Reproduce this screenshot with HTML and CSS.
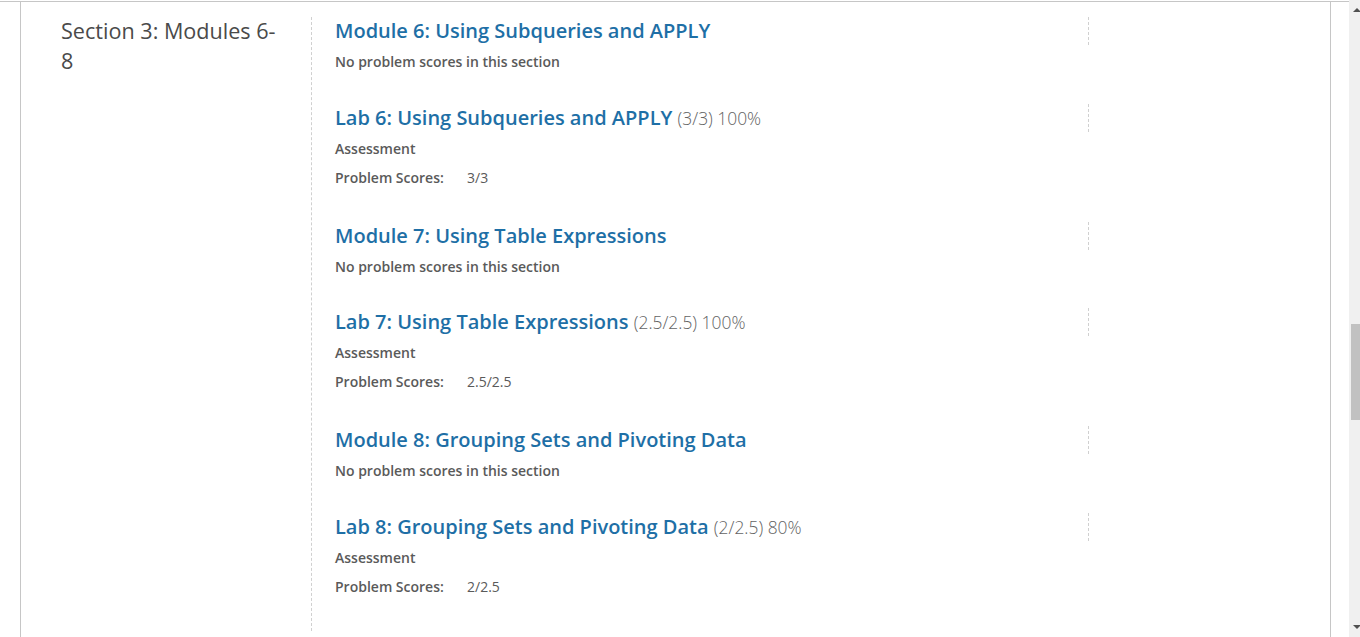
FILE: index.html
```html
<!DOCTYPE html>
<html lang="en">
<head>
<meta charset="utf-8">
<title>Progress</title>
<link rel="stylesheet" href="styles.css">
</head>
<body>
<div class="window">
  <main class="main">
    <div class="panel">
      <section class="chapter">
        <h2 class="chapter-title">Section 3: Modules 6-8</h2>
        <div class="sections">
          <div class="item">
            <h3 class="item-head"><a class="item-link" href="#">Module 6: Using Subqueries and APPLY</a></h3>
            <p class="meta">No problem scores in this section</p>
          </div>
          <div class="item lab">
            <h3 class="item-head"><a class="item-link" href="#">Lab 6: Using Subqueries and APPLY</a> <span class="score">(3/3) 100%</span></h3>
            <p class="meta">Assessment</p>
            <p class="meta scores"><span class="scores-label">Problem Scores:</span><span class="scores-val">3/3</span></p>
          </div>
          <div class="item">
            <h3 class="item-head"><a class="item-link" href="#">Module 7: Using Table Expressions</a></h3>
            <p class="meta">No problem scores in this section</p>
          </div>
          <div class="item lab">
            <h3 class="item-head"><a class="item-link" href="#">Lab 7: Using Table Expressions</a> <span class="score">(2.5/2.5) 100%</span></h3>
            <p class="meta">Assessment</p>
            <p class="meta scores"><span class="scores-label">Problem Scores:</span><span class="scores-val">2.5/2.5</span></p>
          </div>
          <div class="item">
            <h3 class="item-head"><a class="item-link" href="#">Module 8: Grouping Sets and Pivoting Data</a></h3>
            <p class="meta">No problem scores in this section</p>
          </div>
          <div class="item lab">
            <h3 class="item-head"><a class="item-link" href="#">Lab 8: Grouping Sets and Pivoting Data</a> <span class="score">(2/2.5) 80%</span></h3>
            <p class="meta">Assessment</p>
            <p class="meta scores"><span class="scores-label">Problem Scores:</span><span class="scores-val">2/2.5</span></p>
          </div>
        </div>
      </section>
    </div>
  </main>
  <div class="scrollbar">
    <span class="arrow up"></span>
    <div class="track"><div class="thumb"></div></div>
    <span class="arrow down"></span>
  </div>
</div>
</body>
</html>
```
FILE: styles.css
```css
html, body {
  margin: 0;
  padding: 0;
  background: #fff;
}
body {
  font-family: "Open Sans", "Liberation Sans", sans-serif;
  color: #4f4f4f;
}
.window {
  display: flex;
  height: 637px;
  overflow: hidden;
}
.main {
  flex: 1;
  margin-top: 1px;
  border-top: 1px solid #c6c6c6;
  padding-right: 18px;
}
.panel {
  margin-left: 20px;
  height: 100%;
  border-left: 1px solid #c6c6c6;
  border-right: 1px solid #c6c6c6;
  padding: 15px 0 0 40px;
  box-sizing: border-box;
}
.chapter {
  display: flex;
}
.chapter-title {
  width: 222px;
  margin: -1px 0 0;
  padding-right: 28px;
  font-size: 21.6px;
  font-weight: 400;
  line-height: 30px;
  color: #4a4a4a;
}
.sections {
  border-left: 1px dashed #d0d0d0;
  padding: 0 0 34px 23px;
}
.item {
  margin-bottom: 31.5px;
}
.item.lab {
  margin-bottom: 34px;
}
.item:last-child {
  margin-bottom: 0;
}
.item-head {
  width: 754px;
  box-sizing: border-box;
  margin: 0;
  height: 28px;
  line-height: 28px;
  border-right: 1px dashed #d0d0d0;
  font-size: 20px;
  font-weight: 600;
  white-space: nowrap;
}
.item-link {
  color: #1e6fa6;
  text-decoration: none;
}
.score {
  font-size: 17.4px;
  line-height: 1;
  font-weight: 300;
  color: #636363;
}
.meta {
  margin: 7px 0 0;
  font-size: 14px;
  line-height: 20px;
  font-weight: 600;
  color: #5a5a5a;
}
.scores {
  margin-top: 9px;
  display: flex;
}
.scores-label {
  width: 132px;
}
.scores-val {
  font-weight: 400;
  font-size: 14px;
}
.scrollbar {
  width: 11px;
  background: #f0f0f0;
  display: flex;
  flex-direction: column;
  align-items: flex-end;
}
.arrow {
  display: block;
  width: 0;
  height: 0;
  border-left: 4px solid transparent;
  border-right: 4px solid transparent;
  margin-right: -1px;
}
.arrow.up {
  margin-top: 8px;
  border-bottom: 4px solid #505050;
}
.arrow.down {
  margin-bottom: 8px;
  border-top: 4px solid #505050;
}
.track {
  flex: 1;
  width: 9px;
}
.thumb {
  margin-top: 312px;
  height: 96px;
  background: #c1c1c1;
}
```
